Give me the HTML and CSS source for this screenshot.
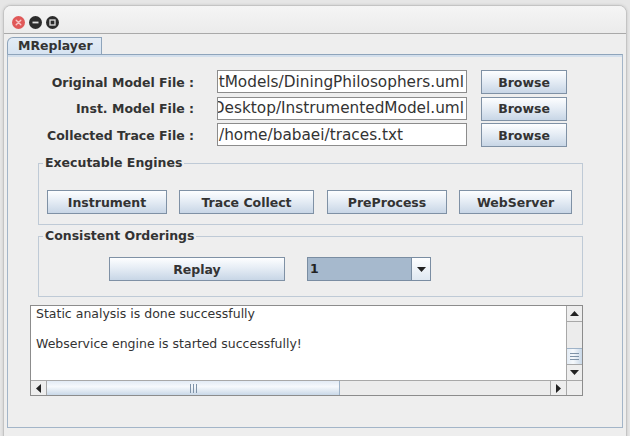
FILE: index.html
```html
<!DOCTYPE html>
<html>
<head>
<meta charset="utf-8">
<link rel="stylesheet" href="styles.css">
</head>
<body>
<div class="window">
  <div class="titlebar">
    <svg class="tb" width="13" height="13" viewBox="0 0 13 13"><circle cx="6.5" cy="6.5" r="6.5" fill="#e05858"/><path d="M4.2 4.2 L8.8 8.8 M8.8 4.2 L4.2 8.8" stroke="#f7c6c6" stroke-width="1.4" stroke-linecap="round"/></svg>
    <svg class="tb" width="13" height="13" viewBox="0 0 13 13"><circle cx="6.5" cy="6.5" r="6.5" fill="#2c2c2c"/><rect x="3.5" y="5.6" width="6" height="1.8" fill="#e0e0e0"/></svg>
    <svg class="tb" width="13" height="13" viewBox="0 0 13 13"><circle cx="6.5" cy="6.5" r="6.5" fill="#2c2c2c"/><rect x="4" y="4" width="5" height="5" fill="none" stroke="#e0e0e0" stroke-width="1.3"/></svg>
  </div>
  <div class="tabs"><div class="tab">MReplayer</div></div>
  <div class="panel">
    <div class="form">
      <div class="row">
        <div class="label">Original Model File :</div>
        <div class="field right"><span>tModels/DiningPhilosophers.uml</span></div>
        <div class="btn browse">Browse</div>
      </div>
      <div class="row">
        <div class="label">Inst. Model File :</div>
        <div class="field right"><span>Desktop/InstrumentedModel.uml</span></div>
        <div class="btn browse">Browse</div>
      </div>
      <div class="row">
        <div class="label">Collected Trace File :</div>
        <div class="field"><span>/home/babaei/traces.txt</span></div>
        <div class="btn browse">Browse</div>
      </div>
    </div>

    <div class="group g1">
      <div class="legend">Executable Engines</div>
      <div class="btnrow">
        <div class="btn b-instrument">Instrument</div>
        <div class="btn b-trace">Trace Collect</div>
        <div class="btn b-pre">PreProcess</div>
        <div class="btn b-web">WebServer</div>
      </div>
    </div>

    <div class="group g2">
      <div class="legend">Consistent Orderings</div>
      <div class="btnrow">
        <div class="btn b-replay">Replay</div>
        <div class="combo">
          <div class="combo-value">1</div>
          <div class="combo-arrow"><svg width="9" height="5" viewBox="0 0 9 5"><polygon points="0,0 9,0 4.5,5" fill="#222"/></svg></div>
        </div>
      </div>
    </div>

    <div class="scrollpane">
      <div class="viewport">
        <div class="line">Static analysis is done successfully</div>
        <div class="line">&nbsp;</div>
        <div class="line">Webservice engine is started successfully!</div>
      </div>
      <div class="vscroll">
        <div class="arrow"><svg width="9" height="5" viewBox="0 0 9 5"><polygon points="0,5 9,5 4.5,0" fill="#222"/></svg></div>
        <div class="vtrack">
          <div class="vthumb"><span></span><span></span><span></span></div>
        </div>
        <div class="arrow"><svg width="9" height="5" viewBox="0 0 9 5"><polygon points="0,0 9,0 4.5,5" fill="#222"/></svg></div>
      </div>
      <div class="hscroll">
        <div class="arrow"><svg width="5" height="9" viewBox="0 0 5 9"><polygon points="5,0 5,9 0,4.5" fill="#222"/></svg></div>
        <div class="htrack">
          <div class="hthumb"><span></span><span></span><span></span></div>
        </div>
        <div class="arrow"><svg width="5" height="9" viewBox="0 0 5 9"><polygon points="0,0 0,9 5,4.5" fill="#222"/></svg></div>
      </div>
      <div class="corner"></div>
    </div>
  </div>
</div>
</body>
</html>
```

FILE: styles.css
```css
* { box-sizing: border-box; }
html, body { margin: 0; padding: 0; }
body {
  width: 630px;
  height: 436px;
  overflow: hidden;
  background: #e6e6e6;
  font-family: "DejaVu Sans", sans-serif;
  color: #333333;
}
.window {
  margin: 5px 0 0 3px;
  width: 624px;
  height: 440px;
  background: #eeeeee;
  border: 1px solid #c4c4c4;
  border-radius: 8px 8px 0 0;
  box-shadow: 0 0 3px rgba(0,0,0,0.15);
}
.titlebar {
  height: 28px;
  display: flex;
  align-items: flex-start;
  gap: 4px;
  padding: 10px 0 0 8px;
  background: linear-gradient(#f5f5f5, #ebebeb);
  border-bottom: 1px solid #a9a9a9;
  border-radius: 7px 7px 0 0;
}
.tb { display: block; }
.tabs {
  padding: 3px 0 0 3px;
  display: flex;
}
.tab {
  width: 95px;
  height: 17px;
  padding-left: 10px;
  font-size: 12.5px;
  font-weight: bold;
  line-height: 16px;
  color: #333;
  background: linear-gradient(#e3ecf6, #d6e3f1);
  border: 1px solid #8ea4bb;
  border-bottom: none;
  border-top-left-radius: 6px;
}
.panel {
  margin-left: 3px;
  width: 616px;
  height: 374px;
  border: 1px solid #a3b5c8;
  border-top-color: #8ea4bb;
  box-shadow: inset 0 2px 0 #d3dfec;
  display: flex;
  flex-direction: column;
}
.form {
  margin-top: 15px;
  display: flex;
  flex-direction: column;
  gap: 2.5px;
}
.row {
  display: flex;
  align-items: center;
  height: 24px;
}
.label {
  width: 186px;
  text-align: right;
  font-size: 12.5px;
  font-weight: bold;
  color: #333;
}
.field {
  margin-left: 23px;
  width: 250px;
  height: 23px;
  align-self: flex-start;
  background: #ffffff;
  border: 1px solid #8c8c8c;
  display: flex;
  align-items: center;
  overflow: hidden;
  padding: 0 2px 0 1px;
  font-size: 15.3px;
  color: #333;
  white-space: nowrap;
}
.field.right { justify-content: flex-end; }
.field span { flex: none; }
.btn {
  height: 24px;
  border: 1px solid #7f91a5;
  background: linear-gradient(#fdfeff, #e6edf5 45%, #c8d6e6);
  font-size: 12.5px;
  font-weight: bold;
  color: #333;
  display: flex;
  align-items: center;
  justify-content: center;
  flex: none;
}
.browse {
  margin-left: 14px;
  width: 86px;
}
.group {
  margin-left: 30px;
  width: 545px;
  border: 1px solid #bfcad6;
  display: flex;
  flex-direction: column;
}
.g1 { margin-top: 16px; height: 62px; }
.g2 { margin-top: 11px; height: 61px; }
.legend {
  align-self: flex-start;
  margin-top: -9px;
  margin-left: 4px;
  padding: 0 2px;
  background: #eeeeee;
  font-size: 12.5px;
  font-weight: bold;
  line-height: 16px;
  color: #333;
}
.btnrow {
  display: flex;
  align-items: flex-start;
}
.g1 .btnrow { margin-top: 19px; margin-left: 8px; }
.b-instrument { width: 120px; }
.b-trace { width: 135px; margin-left: 12px; }
.b-pre { width: 120px; margin-left: 13px; }
.b-web { width: 113px; margin-left: 12px; }
.g2 .btnrow { margin-top: 13px; margin-left: 70px; }
.b-replay { width: 176px; }
.combo {
  margin-left: 22px;
  width: 124px;
  height: 24px;
  border: 1px solid #7a8da2;
  display: flex;
}
.combo-value {
  flex: 1;
  background: #a6b9cd;
  font-size: 12.5px;
  font-weight: bold;
  color: #222;
  padding-left: 2px;
  line-height: 22px;
}
.combo-arrow {
  width: 19px;
  border-left: 1px solid #7a8da2;
  background: linear-gradient(#fdfeff, #dfe8f1);
  display: flex;
  align-items: center;
  justify-content: center;
}
.scrollpane {
  margin-top: 8px;
  margin-left: 22px;
  width: 553px;
  height: 91px;
  border: 1px solid #8c8c8c;
  display: grid;
  grid-template-columns: 1fr 16px;
  grid-template-rows: 1fr 15px;
  background: #ffffff;
}
.viewport {
  padding: 0 5px;
  font-size: 12.5px;
  line-height: 15px;
  color: #333;
  white-space: nowrap;
  overflow: hidden;
}
.vscroll {
  display: flex;
  flex-direction: column;
  background: #ececec;
  border-left: 1px solid #a8a8a8;
}
.arrow {
  flex: none;
  background: #eeeeee;
  display: flex;
  align-items: center;
  justify-content: center;
}
.vscroll .arrow { height: 16px; }
.vscroll .arrow:first-child { border-bottom: 1px solid #a8a8a8; }
.vscroll .arrow:last-child { border-top: 1px solid #a8a8a8; }
.vtrack {
  flex: 1;
  display: flex;
  flex-direction: column;
  justify-content: flex-end;
}
.vthumb {
  height: 16px;
  background: linear-gradient(90deg, #e2ebf5, #f6f9fc 40%, #c9d8e8);
  border-top: 1px solid #9fb3c8;
  display: flex;
  flex-direction: column;
  align-items: center;
  justify-content: center;
  gap: 2px;
}
.vthumb span { width: 9px; height: 1px; background: #7f93a8; }
.hscroll {
  display: flex;
  border-top: 1px solid #a8a8a8;
  background: #ececec;
}
.hscroll .arrow { width: 16px; }
.hscroll .arrow:first-child { border-right: 1px solid #a8a8a8; }
.hscroll .arrow:last-child { border-left: 1px solid #a8a8a8; }
.htrack { flex: 1; display: flex; }
.hthumb {
  width: 293px;
  background: linear-gradient(#e2ebf5, #f6f9fc 40%, #c9d8e8);
  border-right: 1px solid #9fb3c8;
  display: flex;
  align-items: center;
  justify-content: center;
  gap: 2px;
}
.hthumb span { width: 1px; height: 9px; background: #7f93a8; }
.corner {
  background: #eeeeee;
  border-top: 1px solid #a8a8a8;
  border-left: 1px solid #a8a8a8;
}
```
